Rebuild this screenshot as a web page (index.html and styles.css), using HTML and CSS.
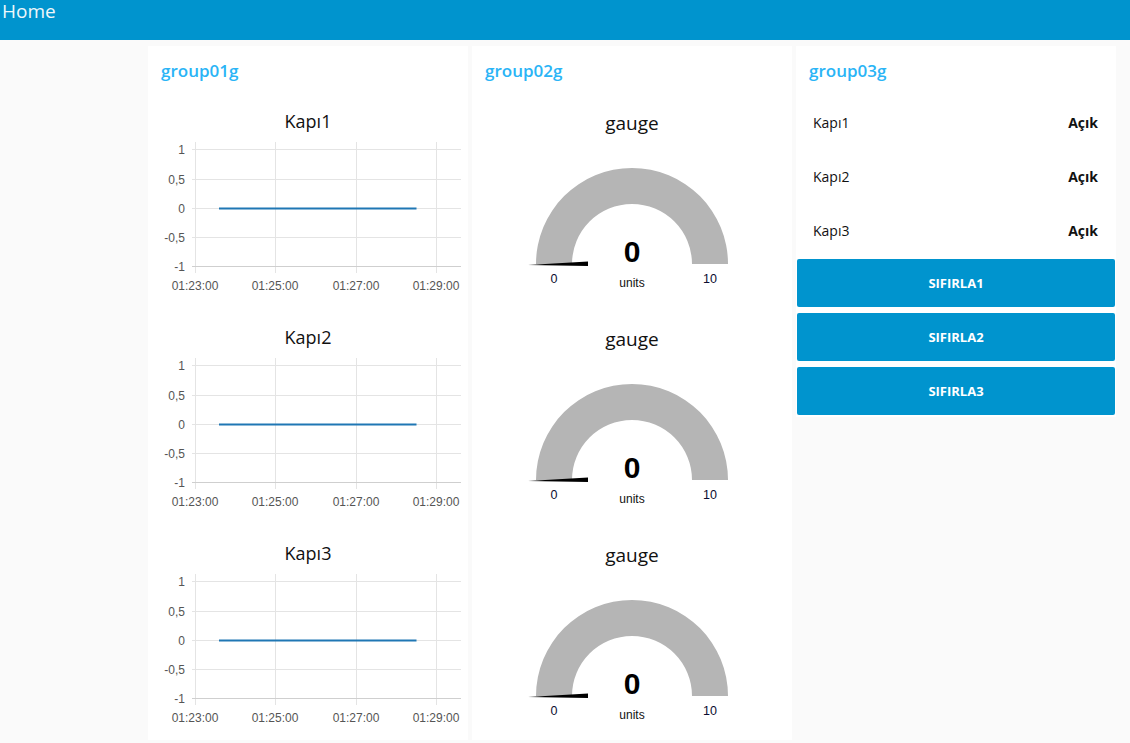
FILE: index.html
```html
<!DOCTYPE html>
<html>
<head>
<meta charset="utf-8">
<link rel="stylesheet" href="styles.css">
</head>
<body>
<header class="toolbar"><span class="toolbar-title">Home</span></header>
<main class="content">
  <section class="card">
    <p class="card-title">group01g</p>
    <div class="widget chart">
      <svg width="320" height="210" viewBox="0 0 320 210">
        <text class="w-title" x="160" y="31">Kapı1</text>
        <g class="grid">
          <line x1="44" y1="52.5" x2="313" y2="52.5"/><line x1="44" y1="82.5" x2="313" y2="82.5"/><line x1="44" y1="111.5" x2="313" y2="111.5"/><line x1="44" y1="140.5" x2="313" y2="140.5"/>
          <line x1="47.5" y1="45" x2="47.5" y2="176"/><line x1="127.5" y1="45" x2="127.5" y2="176"/><line x1="208.5" y1="45" x2="208.5" y2="176"/><line x1="288.5" y1="45" x2="288.5" y2="176"/>
        </g>
        <line class="axis" x1="44" y1="169.5" x2="313" y2="169.5"/>
        <g class="ylab"><text x="37" y="57">1</text><text x="37" y="87">0,5</text><text x="37" y="116">0</text><text x="37" y="145">-0,5</text><text x="37" y="174">-1</text></g>
        <g class="xlab"><text x="47" y="193">01:23:00</text><text x="127" y="193">01:25:00</text><text x="208" y="193">01:27:00</text><text x="288" y="193">01:29:00</text></g>
        <line class="series" x1="71" y1="111.5" x2="268.5" y2="111.5"/>
      </svg>
    </div>
    <div class="widget chart">
      <svg width="320" height="210" viewBox="0 0 320 210">
        <text class="w-title" x="160" y="31">Kapı2</text>
        <g class="grid">
          <line x1="44" y1="52.5" x2="313" y2="52.5"/><line x1="44" y1="82.5" x2="313" y2="82.5"/><line x1="44" y1="111.5" x2="313" y2="111.5"/><line x1="44" y1="140.5" x2="313" y2="140.5"/>
          <line x1="47.5" y1="45" x2="47.5" y2="176"/><line x1="127.5" y1="45" x2="127.5" y2="176"/><line x1="208.5" y1="45" x2="208.5" y2="176"/><line x1="288.5" y1="45" x2="288.5" y2="176"/>
        </g>
        <line class="axis" x1="44" y1="169.5" x2="313" y2="169.5"/>
        <g class="ylab"><text x="37" y="57">1</text><text x="37" y="87">0,5</text><text x="37" y="116">0</text><text x="37" y="145">-0,5</text><text x="37" y="174">-1</text></g>
        <g class="xlab"><text x="47" y="193">01:23:00</text><text x="127" y="193">01:25:00</text><text x="208" y="193">01:27:00</text><text x="288" y="193">01:29:00</text></g>
        <line class="series" x1="71" y1="111.5" x2="268.5" y2="111.5"/>
      </svg>
    </div>
    <div class="widget chart">
      <svg width="320" height="210" viewBox="0 0 320 210">
        <text class="w-title" x="160" y="31">Kapı3</text>
        <g class="grid">
          <line x1="44" y1="52.5" x2="313" y2="52.5"/><line x1="44" y1="82.5" x2="313" y2="82.5"/><line x1="44" y1="111.5" x2="313" y2="111.5"/><line x1="44" y1="140.5" x2="313" y2="140.5"/>
          <line x1="47.5" y1="45" x2="47.5" y2="176"/><line x1="127.5" y1="45" x2="127.5" y2="176"/><line x1="208.5" y1="45" x2="208.5" y2="176"/><line x1="288.5" y1="45" x2="288.5" y2="176"/>
        </g>
        <line class="axis" x1="44" y1="169.5" x2="313" y2="169.5"/>
        <g class="ylab"><text x="37" y="57">1</text><text x="37" y="87">0,5</text><text x="37" y="116">0</text><text x="37" y="145">-0,5</text><text x="37" y="174">-1</text></g>
        <g class="xlab"><text x="47" y="193">01:23:00</text><text x="127" y="193">01:25:00</text><text x="208" y="193">01:27:00</text><text x="288" y="193">01:29:00</text></g>
        <line class="series" x1="71" y1="111.5" x2="268.5" y2="111.5"/>
      </svg>
    </div>
  </section>

  <section class="card">
    <p class="card-title">group02g</p>
    <div class="widget gauge">
      <svg width="320" height="210" viewBox="0 0 320 210">
        <text class="w-title g-title" x="160" y="33">gauge</text>
        <path class="arc" d="M64 167 A96 96 0 0 1 256 167 L220 167 A60 60 0 0 0 100 167 Z"/>
        <polygon class="needle" points="56,168 116,164.5 116,169"/>
        <text class="g-value" x="160" y="165">0</text>
        <text class="g-units" x="160" y="190">units</text>
        <text class="g-lim" x="82" y="186">0</text>
        <text class="g-lim" x="238" y="186">10</text>
      </svg>
    </div>
    <div class="widget gauge">
      <svg width="320" height="210" viewBox="0 0 320 210">
        <text class="w-title g-title" x="160" y="33">gauge</text>
        <path class="arc" d="M64 167 A96 96 0 0 1 256 167 L220 167 A60 60 0 0 0 100 167 Z"/>
        <polygon class="needle" points="56,168 116,164.5 116,169"/>
        <text class="g-value" x="160" y="165">0</text>
        <text class="g-units" x="160" y="190">units</text>
        <text class="g-lim" x="82" y="186">0</text>
        <text class="g-lim" x="238" y="186">10</text>
      </svg>
    </div>
    <div class="widget gauge">
      <svg width="320" height="210" viewBox="0 0 320 210">
        <text class="w-title g-title" x="160" y="33">gauge</text>
        <path class="arc" d="M64 167 A96 96 0 0 1 256 167 L220 167 A60 60 0 0 0 100 167 Z"/>
        <polygon class="needle" points="56,168 116,164.5 116,169"/>
        <text class="g-value" x="160" y="165">0</text>
        <text class="g-units" x="160" y="190">units</text>
        <text class="g-lim" x="82" y="186">0</text>
        <text class="g-lim" x="238" y="186">10</text>
      </svg>
    </div>
  </section>

  <section class="card card-short">
    <p class="card-title">group03g</p>
    <div class="text-row"><span>Kapı1</span><b>Açık</b></div>
    <div class="text-row"><span>Kapı2</span><b>Açık</b></div>
    <div class="text-row"><span>Kapı3</span><b>Açık</b></div>
    <button class="btn">Sıfırla1</button>
    <button class="btn">Sıfırla2</button>
    <button class="btn">Sıfırla3</button>
  </section>
</main>
</body>
</html>
```

FILE: styles.css
```css
html, body {
  margin: 0;
  padding: 0;
}
body {
  background: #fafafa;
  font-family: "Open Sans", "Noto Sans", sans-serif;
  color: #111;
  width: 1130px;
  height: 743px;
  overflow: hidden;
}
.toolbar {
  height: 40px;
  background: #0094ce;
  padding-left: 2px;
}
.toolbar-title {
  display: block;
  color: #eef7fb;
  font-size: 19px;
  line-height: 22px;
  padding-top: 0;
}
.content {
  display: flex;
  align-items: flex-start;
  gap: 4px;
  padding: 6px 0 0 148px;
}
.card {
  width: 320px;
  background: #fff;
  display: flex;
  flex-direction: column;
  gap: 6px;
  padding-bottom: 1px;
}
.card-short {
  padding-bottom: 2px;
}
.card-title {
  margin: 0;
  height: 30px;
  padding: 15px 0 0 13px;
  font-size: 17px;
  font-weight: 600;
  line-height: 20px;
  color: #2ab4f6;
}
.widget svg {
  display: block;
}
.w-title {
  font-family: "Open Sans", "Noto Sans", sans-serif;
  font-size: 18px;
  text-anchor: middle;
  fill: #111;
}
.g-title {
  font-size: 19px;
  font-weight: 500;
}
.grid line {
  stroke: #e4e4e4;
  stroke-width: 1;
}
.axis {
  stroke: #cfcfcf;
  stroke-width: 1;
}
.ylab text {
  font-family: "Liberation Sans", Arial, sans-serif;
  font-size: 12px;
  fill: #555;
  text-anchor: end;
}
.xlab text {
  font-family: "Liberation Sans", Arial, sans-serif;
  font-size: 12px;
  fill: #555;
  text-anchor: middle;
}
.series {
  stroke: #1f77b4;
  stroke-width: 2;
}
.arc {
  fill: #b5b5b5;
}
.needle {
  fill: #000;
}
.g-value {
  font-family: "Liberation Sans", Arial, sans-serif;
  font-weight: bold;
  font-size: 30px;
  text-anchor: middle;
  fill: #000;
}
.g-units {
  font-family: "Liberation Sans", Arial, sans-serif;
  font-size: 12px;
  text-anchor: middle;
  fill: #111;
}
.g-lim {
  font-family: "Liberation Sans", Arial, sans-serif;
  font-size: 12.5px;
  text-anchor: middle;
  fill: #0c0c30;
}
.text-row {
  height: 48px;
  display: flex;
  align-items: center;
  justify-content: space-between;
  padding: 2px 18px 0 17px;
  box-sizing: border-box;
  font-size: 14px;
}
.text-row b {
  font-weight: 700;
}
.btn {
  height: 48px;
  margin: 0 1px;
  border: none;
  border-radius: 2px;
  background: #0094ce;
  color: #fff;
  font-family: "Open Sans", "Noto Sans", sans-serif;
  font-weight: 700;
  font-size: 13px;
  text-transform: uppercase;
  padding: 0;
}
```
